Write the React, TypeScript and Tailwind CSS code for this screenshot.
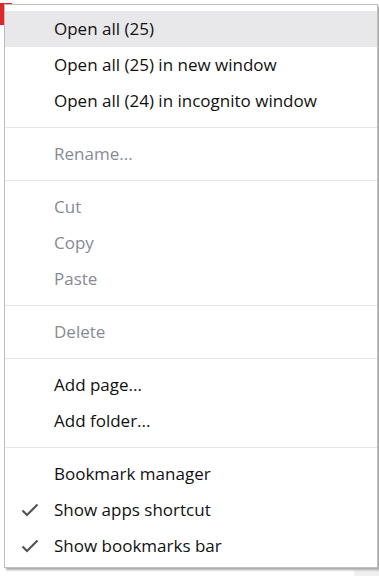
type Item = { label: string; disabled?: boolean; checked?: boolean; active?: boolean };

const groups: Item[][] = [
  [
    { label: "Open all (25)", active: true },
    { label: "Open all (25) in new window" },
    { label: "Open all (24) in incognito window" },
  ],
  [{ label: "Rename...", disabled: true }],
  [
    { label: "Cut", disabled: true },
    { label: "Copy", disabled: true },
    { label: "Paste", disabled: true },
  ],
  [{ label: "Delete", disabled: true }],
  [{ label: "Add page..." }, { label: "Add folder..." }],
  [
    { label: "Bookmark manager" },
    { label: "Show apps shortcut", checked: true },
    { label: "Show bookmarks bar", checked: true },
  ],
];

const Check = () => (
  <svg width="18" height="14" viewBox="0 0 18 14" className="shrink-0">
    <path d="M1.5 7.5 L6 12 L16.5 1.5" fill="none" stroke="#555" strokeWidth="2.2" />
  </svg>
);

const MenuRow = ({ item }: { item: Item }) => (
  <div
    className={`flex h-[36px] items-center ${item.active ? "bg-[#e8e8eb]" : ""} ${
      item.disabled ? "text-[#868b95]" : "text-[#111]"
    }`}
  >
    <div className="flex w-[49px] shrink-0 justify-center pl-[3px] pr-[2px]">
      {item.checked && <Check />}
    </div>
    <span>{item.label}</span>
  </div>
);

export default function App() {
  return (
    <div
      className="relative flex h-[576px] w-[379px] items-start overflow-hidden bg-white pl-[4px] pt-[4px]"
      style={{ fontFamily: '"Open Sans", "Noto Sans", sans-serif' }}
    >
      {/* bits of the page behind the menu */}
      <div className="absolute left-0 top-[3px] h-[2px] w-[12px] bg-[#e0262a]" />
      <div className="absolute left-0 top-[5px] h-[20px] w-[4px] bg-[#e0262a]" />
      <div className="absolute bottom-0 right-0 h-[6px] w-[25px] bg-[#f0f0f0]" />

      <div className="relative w-[374px] border border-[#bdbdbd] bg-white pb-[3px] pt-[6px] text-[17px] shadow-[2px_2px_2px_rgba(0,0,0,0.35)]">
        {groups.map((group, gi) => (
          <div key={gi}>
            {gi > 0 && (
              <div className="py-[8px]">
                <div className="h-px bg-[#e6e6e6]" />
              </div>
            )}
            {group.map((item) => (
              <MenuRow key={item.label} item={item} />
            ))}
          </div>
        ))}
      </div>
    </div>
  );
}
